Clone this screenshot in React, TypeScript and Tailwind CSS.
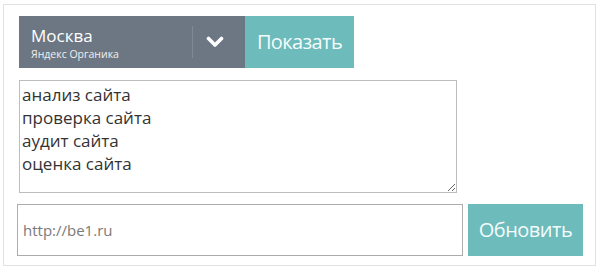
export default function App() {
  return (
    <div
      className="w-[600px] h-[270px] bg-white pt-[4px] pl-[3px]"
      style={{ fontFamily: '"Open Sans", "Noto Sans", sans-serif' }}
    >
      <div className="w-[593px] h-[262px] border border-[#e2e2e2] flex flex-col">
        {/* region selector + show */}
        <div className="flex ml-[15px] mt-[11px] h-[52px]">
          <div className="w-[226px] bg-[#6c7783] flex items-center">
            <div className="flex-1 pl-[12px] pt-[2px] flex flex-col justify-center text-white">
              <span className="text-[17px] leading-[21px]">Москва</span>
              <span className="text-[10.5px] leading-[16px] text-[#eef0f2]">Яндекс Органика</span>
            </div>
            <div className="w-px h-[32px] bg-[#7f8a95]" />
            <div className="w-[44px] mr-[8px] flex items-center justify-center">
              <svg width="18" height="12" viewBox="0 0 18 12" fill="none">
                <path
                  d="M2.5 2.5 L9 9 L15.5 2.5"
                  stroke="white"
                  strokeWidth="3.6"
                  strokeLinecap="round"
                  strokeLinejoin="round"
                />
              </svg>
            </div>
          </div>
          <button
            type="button"
            className="w-[109px] bg-[#6dbbbb] text-[#f4fbfb] text-[20px] tracking-[-0.6px] flex items-center justify-center"
          >
            Показать
          </button>
        </div>

        {/* keywords */}
        <textarea
          className="ml-[15px] mt-[12px] w-[438px] h-[113px] border border-[#bdbdbd] px-[2px] py-[2px] text-[17px] leading-[23px] text-[#333] outline-none"
          defaultValue={"анализ сайта\nпроверка сайта\nаудит сайта\nоценка сайта"}
        />

        {/* site url + refresh */}
        <div className="flex ml-[13px] mt-[11px] h-[52px] gap-[5px]">
          <input
            className="w-[446px] border border-[#acacac] px-[5px] text-[15px] text-[#444] placeholder-[#7a7a7a] outline-none"
            placeholder="http://be1.ru"
          />
          <button
            type="button"
            className="w-[115px] bg-[#6dbbbb] text-[#f4fbfb] text-[20px] tracking-[-0.5px] flex items-center justify-center"
          >
            Обновить
          </button>
        </div>
      </div>
    </div>
  );
}
